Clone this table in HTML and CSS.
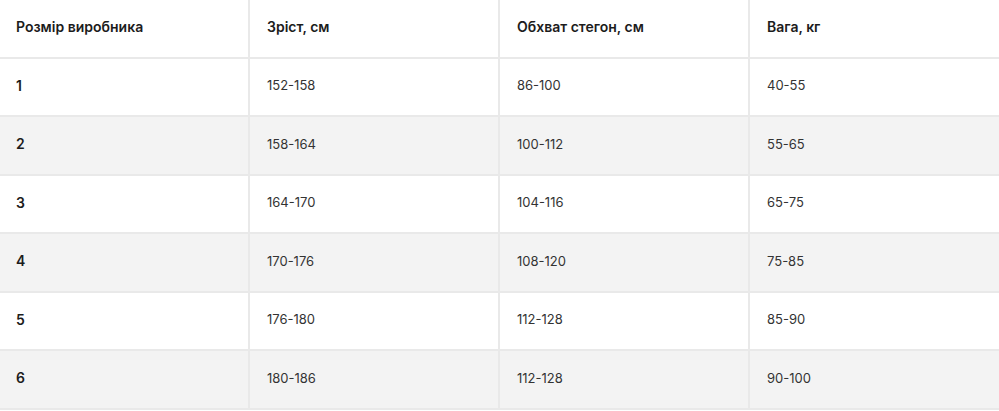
FILE: index.html
```html
<!DOCTYPE html>
<html lang="uk">
<head>
<meta charset="utf-8">
<title>Таблиця розмірів</title>
<link rel="stylesheet" href="styles.css">
</head>
<body>
<table class="sizes">
  <colgroup>
    <col class="c1"><col class="c2"><col class="c3"><col class="c4">
  </colgroup>
  <thead>
    <tr><th>Розмір виробника</th><th>Зріст, см</th><th>Обхват стегон, см</th><th>Вага, кг</th></tr>
  </thead>
  <tbody>
    <tr><td>1</td><td>152-158</td><td>86-100</td><td>40-55</td></tr>
    <tr><td>2</td><td>158-164</td><td>100-112</td><td>55-65</td></tr>
    <tr><td>3</td><td>164-170</td><td>104-116</td><td>65-75</td></tr>
    <tr><td>4</td><td>170-176</td><td>108-120</td><td>75-85</td></tr>
    <tr><td>5</td><td>176-180</td><td>112-128</td><td>85-90</td></tr>
    <tr><td>6</td><td>180-186</td><td>112-128</td><td>90-100</td></tr>
  </tbody>
</table>
</body>
</html>
```
FILE: styles.css
```css
html, body {
  margin: 0;
  padding: 0;
  background: #ffffff;
}
.sizes {
  width: 999px;
  border-collapse: separate;
  border-spacing: 0;
  table-layout: fixed;
  font-family: Inter, "Noto Sans", sans-serif;
  font-size: 13px;
  color: #333333;
}
.c1 { width: 248px; }
.c2 { width: 250px; }
.c3 { width: 250px; }
.c4 { width: 251px; }
.sizes th,
.sizes td {
  box-sizing: border-box;
  height: 58.5px;
  padding: 0 16px 3px;
  text-align: left;
  vertical-align: middle;
  border-bottom: 2px solid #e9e9e9;
  font-weight: 400;
}
.sizes th + th,
.sizes td + td {
  border-left: 2px solid #e9e9e9;
  padding-left: 17px;
}
.sizes th {
  font-size: 14px;
  font-weight: 600;
  color: #1c1c1c;
}
.sizes td:first-child {
  font-size: 14px;
  font-weight: 600;
  color: #1c1c1c;
}
.sizes tbody tr:nth-child(even) {
  background: #f3f3f3;
}
```
